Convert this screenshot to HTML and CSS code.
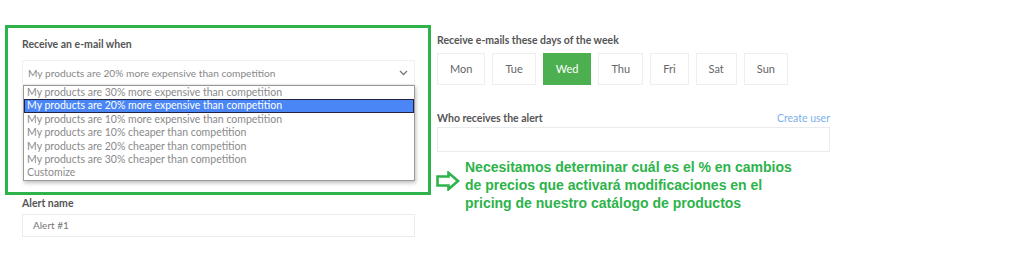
FILE: index.html
```html
<!DOCTYPE html>
<html lang="en">
<head>
    <meta charset="UTF-8">
    <title>Alert settings</title>
    <link rel="stylesheet" href="styles.css">
</head>
<body>
    <div class="page">
        <div class="col-left">
            <div class="highlight">
                <div class="field">
                    <label class="label">Receive an e-mail when</label>
                    <div class="select">
                        <span>My products are 20% more expensive than competition</span>
                        <svg class="chevron" width="9" height="6" viewBox="0 0 9 6"><path d="M1 1l3.5 3.5L8 1" fill="none" stroke="#777" stroke-width="1.3"/></svg>
                    </div>
                    <ul class="options">
                        <li>My products are 30% more expensive than competition</li>
                        <li class="selected">My products are 20% more expensive than competition</li>
                        <li>My products are 10% more expensive than competition</li>
                        <li>My products are 10% cheaper than competition</li>
                        <li>My products are 20% cheaper than competition</li>
                        <li>My products are 30% cheaper than competition</li>
                        <li>Customize</li>
                    </ul>
                </div>
            </div>
            <div class="field field-name">
                <label class="label">Alert name</label>
                <div class="input">Alert #1</div>
            </div>
        </div>

        <div class="col-right">
            <label class="label">Receive e-mails these days of the week</label>
            <div class="days">
                <span class="day">Mon</span>
                <span class="day">Tue</span>
                <span class="day active">Wed</span>
                <span class="day">Thu</span>
                <span class="day">Fri</span>
                <span class="day">Sat</span>
                <span class="day">Sun</span>
            </div>

            <div class="label-row">
                <label class="label">Who receives the alert</label>
                <a class="link" href="#">Create user</a>
            </div>
            <div class="input input-users"></div>

            <div class="note">
                <svg class="arrow" width="24" height="20" viewBox="0 0 24 20"><path d="M1.5 5.5h11V1.8L22 10l-9.5 8.2V14.5h-11z" fill="none" stroke="#2db34a" stroke-width="2.6"/></svg>
                <p>Necesitamos determinar cuál es el % en cambios<br>de precios que activará modificaciones en el<br>pricing de nuestro catálogo de productos</p>
            </div>
        </div>
    </div>
</body>
</html>
```

FILE: styles.css
```css
body {
    margin: 0;
    background-color: #ffffff;
    font-family: Lato, "Open Sans", sans-serif;
    color: #555555;
}
.page {
    display: flex;
    padding: 25px 0 0 5px;
}
.col-left {
    width: 426px;
}
.highlight {
    border: 3px solid #2db34a;
    padding: 10px 13px 11px 14px;
}
.label {
    display: block;
    font-size: 10.5px;
    font-weight: bold;
    color: #555555;
}
.select {
    display: flex;
    align-items: center;
    justify-content: space-between;
    height: 23px;
    margin-top: 10px;
    padding: 0 6px 0 5px;
    border: 1px solid #f0f0f0;
    font-size: 10.2px;
    color: #888888;
}
.options {
    list-style: none;
    margin: 0 0 0 1px;
    padding: 0;
    border: 1px solid #9a9a9a;
    box-shadow: 1px 2px 4px rgba(0, 0, 0, 0.25);
    font-size: 10.5px;
    color: #8a8a8a;
}
.options li {
    height: 13.4px;
    line-height: 13.4px;
    padding-left: 3px;
}
.options li.selected {
    background-color: #4a86f5;
    color: #ffffff;
    outline: 1px solid #222244;
    outline-offset: -1px;
}
.field-name {
    padding: 2px 0 0 17px;
    width: 393px;
}
.input {
    height: 21px;
    margin-top: 5px;
    padding: 0 10px;
    border: 1px solid #ebebeb;
    font-size: 10px;
    line-height: 21px;
    color: #777777;
}
.col-right {
    width: 393px;
    padding: 9px 0 0 6px;
}
.days {
    display: flex;
    gap: 7px;
    margin-top: 7px;
}
.day {
    padding: 0 12px;
    height: 30px;
    line-height: 30px;
    border: 1px solid #eeeeee;
    font-size: 11px;
    color: #666666;
}
.day.active {
    background-color: #4caf50;
    border-color: #4caf50;
    color: #ffffff;
}
.label-row {
    display: flex;
    justify-content: space-between;
    align-items: baseline;
    margin-top: 27px;
}
.link {
    font-size: 10.5px;
    color: #7db0ea;
    text-decoration: none;
}
.input-users {
    height: 23px;
    margin-top: 3px;
}
.note {
    display: flex;
    align-items: center;
    gap: 5px;
    margin-top: 6px;
}
.arrow {
    flex: none;
    margin: -9px 0 0 -1px;
}
.note p {
    margin: 0;
    font-family: "Liberation Sans", Arial, sans-serif;
    font-size: 14px;
    font-weight: bold;
    line-height: 18px;
    color: #2db34a;
}
```
